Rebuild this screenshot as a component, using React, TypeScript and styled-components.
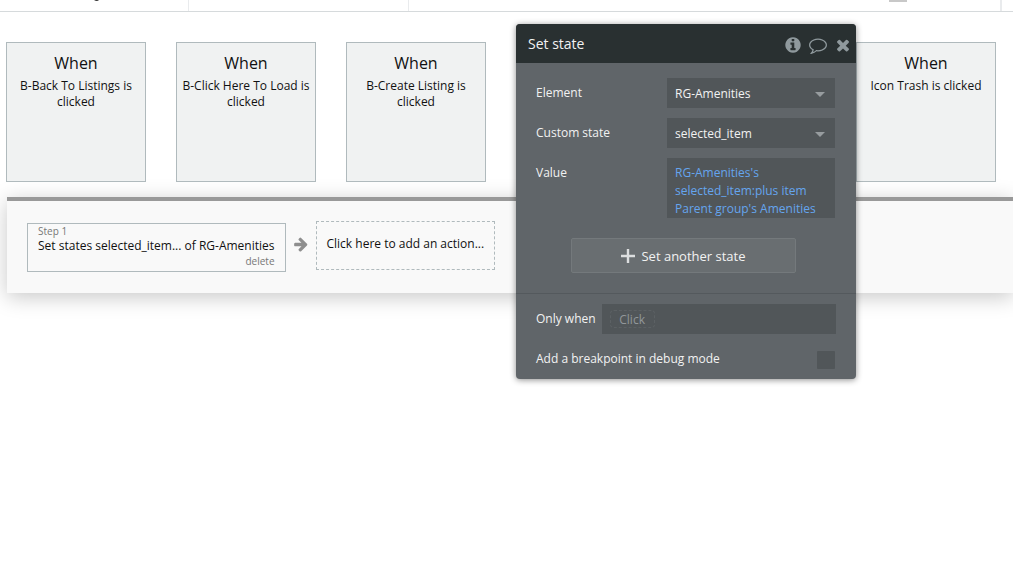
import React from "react";
import styled, { createGlobalStyle } from "styled-components";

const GlobalStyle = createGlobalStyle`
  *, *::before, *::after { box-sizing: border-box; }
  body {
    margin: 0;
    background: #fff;
    color: #111;
    font-family: "Open Sans", sans-serif;
    font-size: 12px;
    line-height: 16px;
    overflow-x: hidden;
  }
  button, input, select, textarea { font: inherit; color: inherit; }
`;

const Page = styled.div`
  position: relative;
  overflow: hidden;
  min-height: 100vh;
`;

const TopBar = styled.header`
  display: flex;
  height: 12px;
  border-bottom: 1px solid #d6dadc;
  overflow: hidden;
`;

const TopCell = styled.div<{ $width?: number }>`
  display: flex;
  justify-content: center;
  flex: ${(p) => (p.$width ? `0 0 ${p.$width}px` : "1 1 0")};
  border-right: 1px solid #e9ebed;
`;

const Avatar = styled.span`
  width: 18px;
  height: 2px;
  margin-left: 386px;
  background: #c8c8c8;
`;

const Descender = styled.svg`
  width: 8px;
  height: 2px;
  margin-left: 6px;
`;

const TopEnd = styled.div`
  flex: 0 0 12px;
  border-left: 1px solid #e9ebed;
`;

const EventGrid = styled.section`
  display: grid;
  grid-template-columns: repeat(6, 140px);
  gap: 30px;
  padding: 30px 6px 15px;
`;

const EventCard = styled.button<{ $column: number }>`
  grid-column: ${(p) => p.$column};
  display: flex;
  flex-direction: column;
  align-items: center;
  height: 140px;
  padding: 8px 4px;
  border: 1px solid #b0babd;
  background: #f0f2f2;
  text-align: center;
`;

const EventTitle = styled.span`
  font-size: 16px;
  line-height: 24px;
  margin-bottom: 3px;
`;

const Actions = styled.section`
  display: flex;
  align-items: flex-start;
  margin-left: 7px;
  height: 96px;
  padding: 20px;
  border-top: 4px solid #999;
  background: #f9f9f9;
  box-shadow: 0 4px 20px rgba(0, 0, 0, 0.22);
`;

const Step = styled.article`
  display: flex;
  flex-direction: column;
  height: 49px;
  margin-top: 2px;
  padding: 0 10px;
  border: 1px solid #b0babd;
  white-space: nowrap;
`;

const StepNumber = styled.span`
  color: #777;
  font-size: 10px;
  line-height: 14px;
`;

const DeleteButton = styled.button`
  align-self: flex-end;
  padding: 0;
  border: 0;
  background: none;
  color: #777;
  font-size: 10px;
  line-height: 14px;
`;

const ArrowWrap = styled.span`
  display: flex;
  align-items: center;
  justify-content: center;
  width: 30px;
  height: 46px;
  color: #8e8e8e;
`;

const AddAction = styled.button`
  height: 49px;
  padding: 0 10px 4px;
  border: 1px dashed #b0babd;
  background: none;
  white-space: nowrap;
`;

const Dialog = styled.section`
  position: absolute;
  left: 516px;
  top: 24px;
  width: 340px;
  border-radius: 4px;
  overflow: hidden;
  background: #606569;
  color: #f2f2f2;
  box-shadow: 0 1px 6px rgba(0, 0, 0, 0.45);
`;

const DialogHeader = styled.header`
  display: flex;
  align-items: center;
  height: 39px;
  padding: 0 4px 0 12px;
  background: #293031;
`;

const DialogTitle = styled.h2`
  flex: 1;
  margin: 0;
  font-size: 14px;
  font-weight: 400;
  line-height: 18px;
`;

const IconButton = styled.button`
  display: flex;
  margin-left: 7px;
  padding: 2px 0 0;
  border: 0;
  background: none;
  color: #8f999d;
`;

const Fields = styled.div`
  display: flex;
  flex-direction: column;
  gap: 10px;
  padding: 15px 21px 20px 20px;
`;

const Field = styled.div`
  display: flex;
  justify-content: space-between;
`;

const Label = styled.label`
  line-height: 30px;
  white-space: nowrap;
`;

const SelectBox = styled.div`
  display: flex;
  align-items: center;
  width: 168px;
  height: 30px;
  background: #515659;
  &::after {
    content: "";
    margin: 2px 10px 0 -20px;
    border: 5px solid transparent;
    border-top-color: #979c9f;
    border-bottom: 0;
    pointer-events: none;
  }
`;

const Select = styled.select`
  flex: 1;
  height: 30px;
  padding: 2px 20px 0 8px;
  border: 0;
  appearance: none;
  background: none;
`;

const Expression = styled.textarea`
  width: 168px;
  height: 60px;
  padding: 6px 8px 0;
  border: 0;
  resize: none;
  overflow: hidden;
  background: #515659;
  color: #65a5ee;
  line-height: 18px;
`;

const AddState = styled.button`
  display: flex;
  align-items: center;
  justify-content: center;
  gap: 6px;
  width: 225px;
  height: 35px;
  margin: 10px 0 0 35px;
  border: 1px solid #74797c;
  border-radius: 2px;
  background: #696e71;
  font-size: 13px;
`;

const Conditions = styled.div`
  display: flex;
  flex-direction: column;
  gap: 10px;
  padding: 10px 20px 5px;
  border-top: 1px solid #54595d;
`;

const ConditionBox = styled.div`
  display: flex;
  align-items: flex-start;
  flex: 1;
  height: 30px;
  margin-left: 6px;
  padding: 6px 0 0 8px;
  background: #515659;
`;

const ConditionInput = styled.input`
  width: 45px;
  height: 18px;
  padding: 0;
  border: 1px dashed #5c6164;
  border-radius: 4px;
  background: none;
  text-align: center;
  &::placeholder { color: #92979a; opacity: 1; }
`;

const Checkbox = styled.input`
  appearance: none;
  width: 18px;
  height: 18px;
  margin: 7px 1px 0 0;
  border-radius: 1px;
  background: #515659;
`;

const Icon = ({ d, size }: { d: string; size: number }) => (
  <svg width={size} height={size} viewBox="0 0 1792 1792" fill="currentColor" aria-hidden="true">
    <path d={d} />
  </svg>
);

const INFO =
  "M1152 1376v-160q0-14-9-23t-23-9h-96v-512q0-14-9-23t-23-9h-320q-14 0-23 9t-9 23v160q0 14 9 23t23 9h96v320h-96q-14 0-23 9t-9 23v160q0 14 9 23t23 9h448q14 0 23-9t9-23zm-128-896v-160q0-14-9-23t-23-9h-192q-14 0-23 9t-9 23v160q0 14 9 23t23 9h192q14 0 23-9t9-23zm640 416q0 209-103 385.5t-279.5 279.5-385.5 103-385.5-103-279.5-279.5-103-385.5 103-385.5 279.5-279.5 385.5-103 385.5 103 279.5 279.5 103 385.5z";
const COMMENT =
  "M896 384q-204 0-381.5 69.5t-282 187.5-104.5 255q0 112 71.5 213.5t201.5 175.5l87 50-27 96q-24 91-70 172 152-63 275-171l43-38 57 6q69 8 130 8 204 0 381.5-69.5t282-187.5 104.5-255-104.5-255-282-187.5-381.5-69.5zm896 512q0 174-120 321.5t-326 233-450 85.5q-70 0-145-8-198 175-460 242-49 14-114 22h-5q-15 0-27-10.5t-16-27.5v-1q-3-4-.5-12t2-10 4.5-9.5l6-9 7-8.5 8-9q7-8 31-34.5t34.5-38 31-39.5 32.5-51 27-59 26-76q-157-89-247.5-220t-90.5-281q0-174 120-321.5t326-233 450-85.5 450 85.5 326 233 120 321.5z";
const CLOSE =
  "M1490 1322q0 40-28 68l-136 136q-28 28-68 28t-68-28l-294-294-294 294q-28 28-68 28t-68-28l-136-136q-28-28-28-68t28-68l294-294-294-294q-28-28-28-68t28-68l136-136q28-28 68-28t68 28l294 294 294-294q28-28 68-28t68 28l136 136q28 28 28 68t-28 68l-294 294 294 294q28 28 28 68z";
const ARROW =
  "M1600 960q0 54-37 91l-651 651q-39 37-91 37-51 0-90-37l-75-75q-38-38-38-91t38-91l293-293h-704q-52 0-84.5-37.5t-32.5-90.5v-128q0-53 32.5-90.5t84.5-37.5h704l-293-294q-38-36-38-90t38-90l75-75q38-38 90-38 53 0 91 38l651 651q37 35 37 90z";

const events = [
  { column: 1, text: "B-Back To Listings is clicked" },
  { column: 2, text: "B-Click Here To Load is clicked" },
  { column: 3, text: "B-Create Listing is clicked" },
  { column: 6, text: "Icon Trash is clicked" },
];

export default function App() {
  return (
    <Page>
      <GlobalStyle />
      <TopBar>
        <TopCell $width={189}>
          <Descender viewBox="0 0 8 2" aria-hidden="true">
            <path d="M1 0Q4 2 6 0" fill="#333" />
          </Descender>
        </TopCell>
        <TopCell $width={220} />
        <TopCell>
          <Avatar />
        </TopCell>
        <TopEnd />
      </TopBar>
      <main>
        <EventGrid>
          {events.map((event) => (
            <EventCard key={event.column} $column={event.column}>
              <EventTitle>When</EventTitle>
              <span>{event.text}</span>
            </EventCard>
          ))}
        </EventGrid>
        <Actions>
          <Step>
            <StepNumber>Step 1</StepNumber>
            <span>Set states selected_item... of RG-Amenities</span>
            <DeleteButton>delete</DeleteButton>
          </Step>
          <ArrowWrap>
            <Icon d={ARROW} size={16} />
          </ArrowWrap>
          <AddAction>Click here to add an action...</AddAction>
        </Actions>
      </main>
      <Dialog role="dialog" aria-labelledby="dialog-title">
        <DialogHeader>
          <DialogTitle id="dialog-title">Set state</DialogTitle>
          <IconButton aria-label="Information">
            <Icon d={INFO} size={18} />
          </IconButton>
          <IconButton aria-label="Comment">
            <Icon d={COMMENT} size={18} />
          </IconButton>
          <IconButton aria-label="Close">
            <Icon d={CLOSE} size={18} />
          </IconButton>
        </DialogHeader>
        <Fields>
          <Field>
            <Label htmlFor="element">Element</Label>
            <SelectBox>
              <Select id="element">
                <option>RG-Amenities</option>
              </Select>
            </SelectBox>
          </Field>
          <Field>
            <Label htmlFor="state">Custom state</Label>
            <SelectBox>
              <Select id="state">
                <option>selected_item</option>
              </Select>
            </SelectBox>
          </Field>
          <Field>
            <Label htmlFor="value">Value</Label>
            <Expression
              id="value"
              spellCheck={false}
              defaultValue={"RG-Amenities's\nselected_item:plus item\nParent group's Amenities"}
            />
          </Field>
          <AddState>
            <svg width="14" height="14" viewBox="0 0 14 14" aria-hidden="true">
              <path d="M7 0V14M0 7H14" stroke="#dcdedf" strokeWidth="2.4" />
            </svg>
            Set another state
          </AddState>
        </Fields>
        <Conditions>
          <Field>
            <Label htmlFor="condition">Only when</Label>
            <ConditionBox>
              <ConditionInput id="condition" placeholder="Click" />
            </ConditionBox>
          </Field>
          <Field>
            <Label htmlFor="breakpoint">Add a breakpoint in debug mode</Label>
            <Checkbox id="breakpoint" type="checkbox" />
          </Field>
        </Conditions>
      </Dialog>
    </Page>
  );
}
